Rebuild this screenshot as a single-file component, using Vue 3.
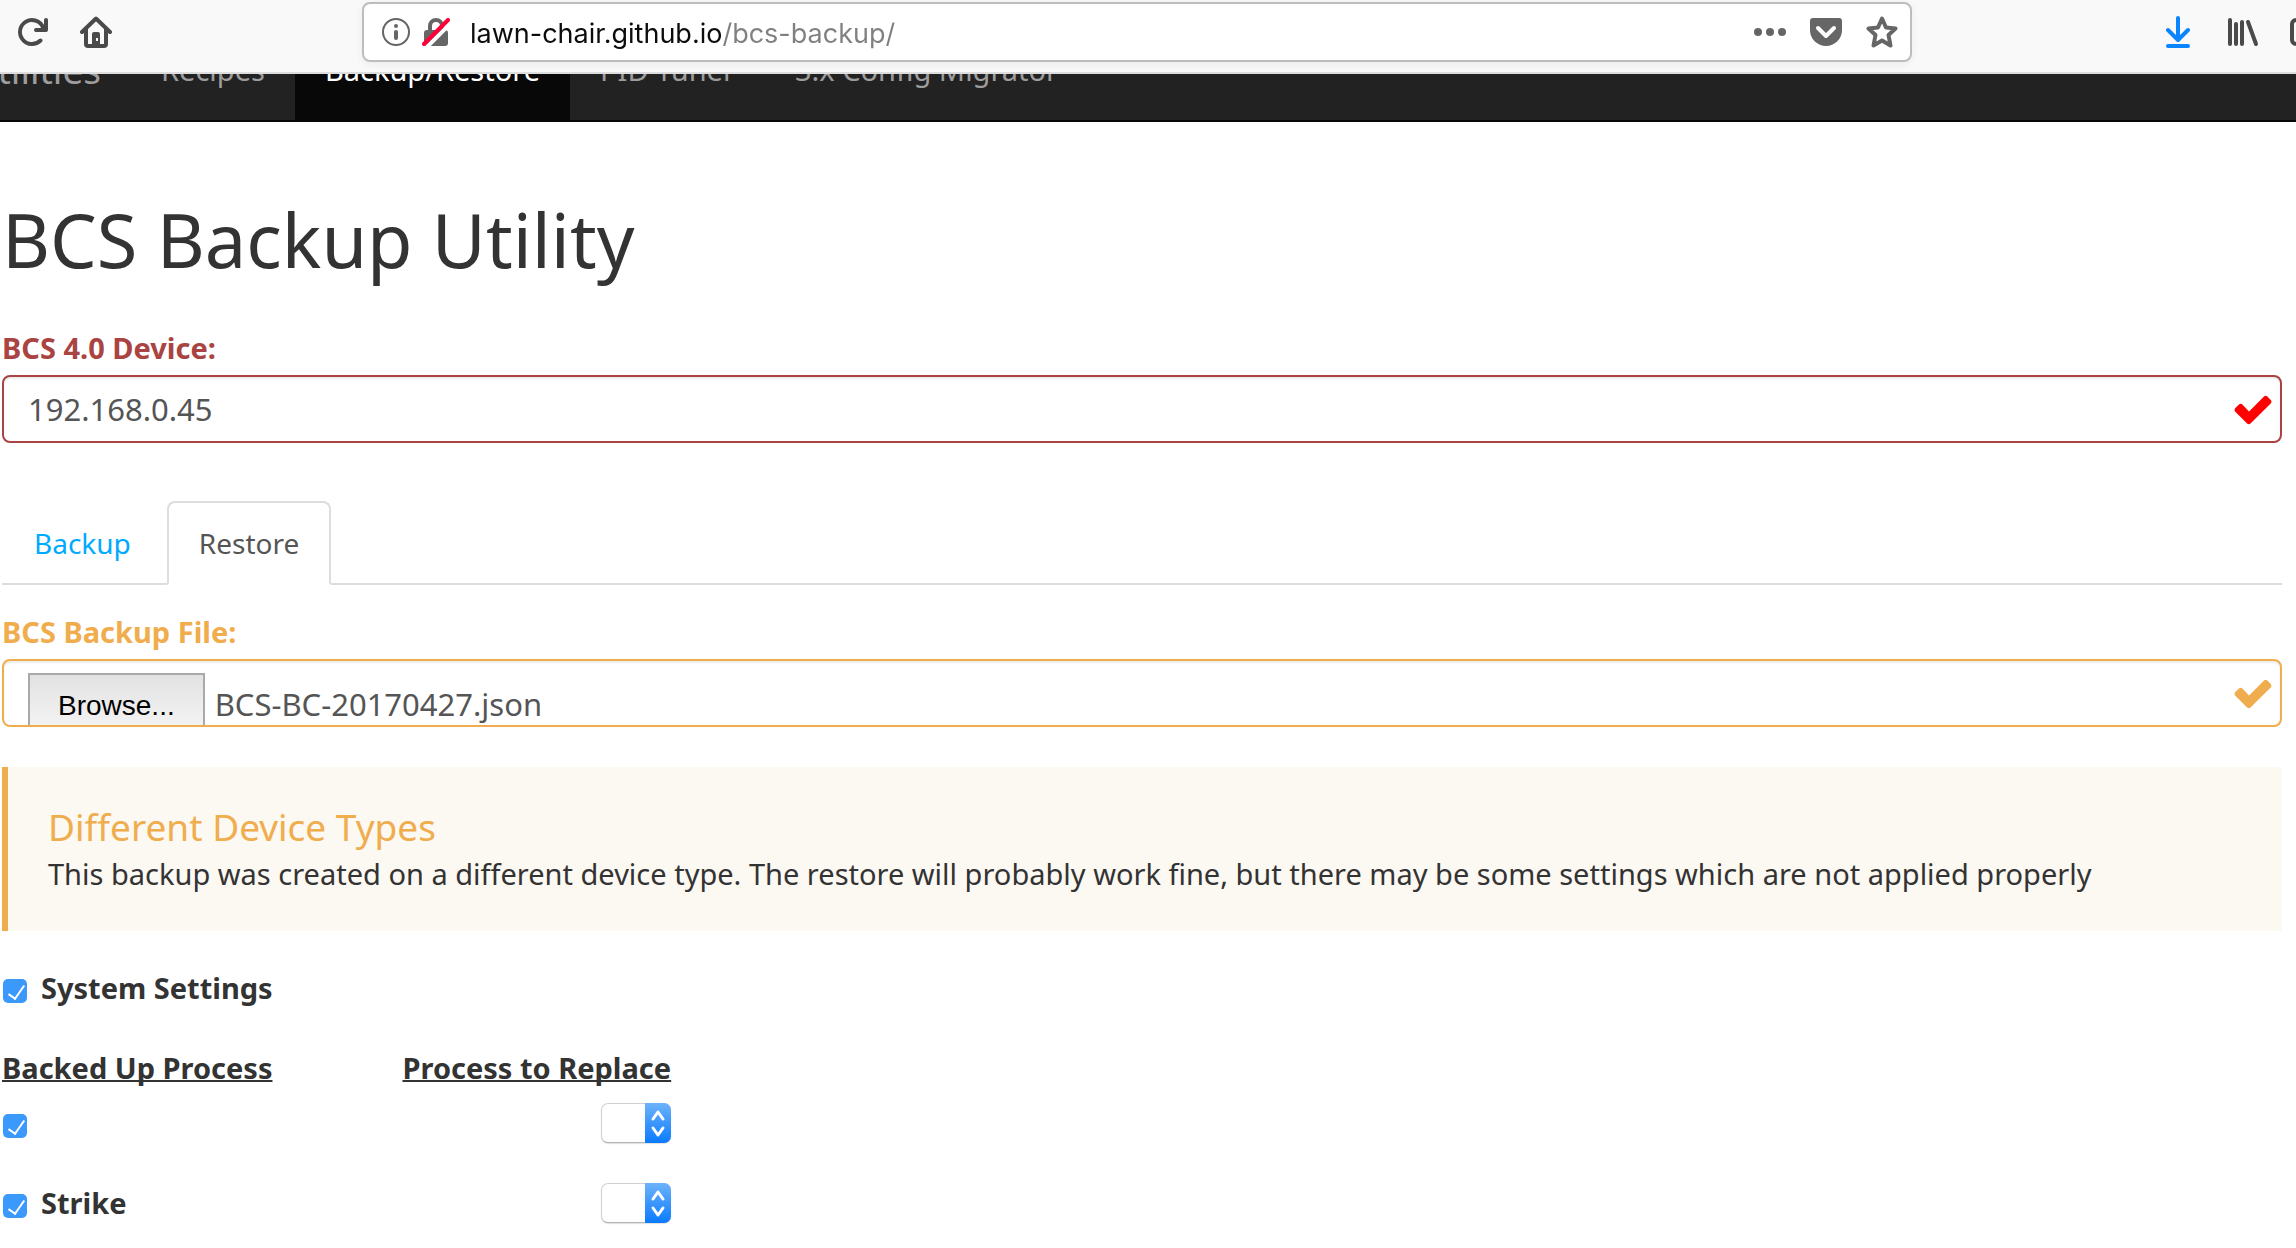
<script setup>
import { ref } from 'vue'

const url = ref('lawn-chair.github.io/bcs-backup/')
const device = ref('192.168.0.45')
const fileName = ref('BCS-BC-20170427.json')
const fileInput = ref(null)
const systemSettings = ref(true)

const navItems = [
  { label: 'Recipes', active: false },
  { label: 'Backup/Restore', active: true },
  { label: 'PID Tuner', active: false },
  { label: '3.x Config Migrator', active: false },
]

const processes = ref([
  { name: '', checked: true },
  { name: 'Strike', checked: true },
])

function onFile(event) {
  const file = event.target.files[0]
  if (file) fileName.value = file.name
}
</script>

<template>
  <div class="window">
    <header class="toolbar">
      <div class="tools-left">
        <button type="button" class="tool" aria-label="Reload">
          <svg width="32" height="32" viewBox="0 0 16 16"><path fill="#4a4a4a" d="M15 1a1 1 0 0 0-1 1v2.418A6.995 6.995 0 1 0 8 15a6.954 6.954 0 0 0 4.95-2.05 1 1 0 0 0-1.414-1.414A5.019 5.019 0 1 1 12.549 6H10a1 1 0 0 0 0 2h5a1 1 0 0 0 1-1V2a1 1 0 0 0-1-1z" /></svg>
        </button>
        <button type="button" class="tool" aria-label="Home">
          <svg width="32" height="32" viewBox="0 0 32 32">
            <path d="M2 16 16 2.500 30 16M6 13v15q0 2 2 2h16q2 0 2-2V13" fill="none" stroke="#4a4a4a" stroke-width="4" stroke-linecap="round" stroke-linejoin="round" />
            <path d="M12 30V18q0-2 2-2h4q2 0 2 2v12z" fill="#4a4a4a" />
            <rect x="16" y="22" width="2" height="3" fill="#f9f9fa" />
          </svg>
        </button>
      </div>
      <div class="urlbar">
        <svg width="28" height="28" viewBox="0 0 28 28">
          <circle cx="14" cy="14" r="13" fill="none" stroke="#666" stroke-width="2" />
          <circle cx="14" cy="8" r="2" fill="#666" />
          <path d="M14 14v6" stroke="#666" stroke-width="4" stroke-linecap="round" />
        </svg>
        <svg class="lock" width="28" height="28" viewBox="0 0 28 28">
          <path d="M8 14V8a6 6 0 0 1 12 0v6" fill="none" stroke="#666" stroke-width="4" />
          <rect x="2" y="12" width="24" height="16" rx="3" fill="#666" />
          <path d="M5 29 30 4" stroke="#fff" stroke-width="4" />
          <path d="M2 26 26 2" stroke="#ff0039" stroke-width="4" stroke-linecap="round" />
        </svg>
        <input v-model="url" class="url" type="text" aria-label="Address" spellcheck="false" />
        <button type="button" class="tool" aria-label="Page actions">
          <svg width="32" height="32" viewBox="0 0 32 32" fill="#666"><circle cx="4" cy="16" r="4" /><circle cx="16" cy="16" r="4" /><circle cx="28" cy="16" r="4" /></svg>
        </button>
        <button type="button" class="tool" aria-label="Save to Pocket">
          <svg width="32" height="32" viewBox="0 0 32 32">
            <path d="M3 2h26q3 0 3 3v9a16 16 0 0 1-32 0V5q0-3 3-3z" fill="#666" />
            <path d="m8 12 8 8 8-8" fill="none" stroke="#fff" stroke-width="4" stroke-linecap="round" stroke-linejoin="round" />
          </svg>
        </button>
        <button type="button" class="tool" aria-label="Bookmark">
          <svg width="32" height="32" viewBox="0 0 32 32"><path d="m16 2.500 4 9 9.500 1-7 6.500 2 10.500-8.500-5-8.500 5 2-10.500-7-6.500 9.500-1z" fill="none" stroke="#666" stroke-width="4" stroke-linejoin="round" /></svg>
        </button>
      </div>
      <div class="tools-right">
        <button type="button" class="tool" aria-label="Downloads">
          <svg width="24" height="32" viewBox="0 0 24 32" fill="none" stroke="#0a84ff" stroke-width="4" stroke-linecap="round" stroke-linejoin="round"><path d="M12 2v21M2 14l10 10 10-10M2 30h20" /></svg>
        </button>
        <button type="button" class="tool" aria-label="Library">
          <svg class="library" width="24" height="32" viewBox="0 0 24 32" fill="none" stroke="#4a4a4a" stroke-width="4" stroke-linecap="round"><path d="M2 4v24M8 8v20M14 6v22M20 6l8 22" /></svg>
        </button>
        <button type="button" class="tool" aria-label="Sidebar">
          <svg width="32" height="32" viewBox="0 0 32 32" fill="none" stroke="#4a4a4a" stroke-width="4"><rect x="2" y="4" width="28" height="24" rx="4" /><path d="M14 4v24" /></svg>
        </button>
      </div>
    </header>

    <div class="viewport">
      <nav class="navbar">
        <a href="#" class="brand">BCS Utilities</a>
        <a v-for="item in navItems" :key="item.label" href="#" class="nav-link" :class="{ active: item.active }">{{ item.label }}</a>
      </nav>
    </div>

    <main class="page">
      <h1>BCS Backup Utility</h1>

      <div class="group error">
        <label for="device">BCS 4.0 Device:</label>
        <div class="field">
          <input id="device" v-model="device" type="text" class="control" />
          <svg class="ok" width="38" height="30" viewBox="0 0 38 30"><path d="M1.300 13 5 9.500q1.700-1.500 3.400 0l6.600 7L30 1.500q1.700-1.500 3.400 0l3.300 3.500q1.500 1.700 0 3.400L16.500 28.600q-1.700 1.500-3.400 0L1.300 16.800q-1.500-1.800 0-3.800z" /></svg>
        </div>
      </div>

      <div class="tabs">
        <a href="#backup" class="tab">Backup</a>
        <a href="#restore" class="tab active">Restore</a>
      </div>

      <div class="group warning">
        <label for="backup-file">BCS Backup File:</label>
        <div class="field">
          <div class="control file">
            <button type="button" class="browse" @click="fileInput.click()">Browse...</button>
            <span class="file-name">{{ fileName }}</span>
            <input id="backup-file" ref="fileInput" type="file" class="file-input" tabindex="-1" @change="onFile" />
          </div>
          <svg class="ok" width="38" height="30" viewBox="0 0 38 30"><path d="M1.300 13 5 9.500q1.700-1.500 3.400 0l6.600 7L30 1.500q1.700-1.500 3.400 0l3.300 3.500q1.500 1.700 0 3.400L16.500 28.600q-1.700 1.500-3.400 0L1.300 16.800q-1.500-1.800 0-3.800z" /></svg>
        </div>
      </div>

      <section class="callout">
        <h4>Different Device Types</h4>
        <p>This backup was created on a different device type. The restore will probably work fine, but there may be some settings which are not applied properly</p>
      </section>

      <label class="check">
        <input v-model="systemSettings" type="checkbox" />
        <span>System Settings</span>
      </label>

      <table class="processes">
        <thead>
          <tr>
            <th scope="col">Backed Up Process</th>
            <th scope="col">Process to Replace</th>
          </tr>
        </thead>
        <tbody>
          <tr v-for="(process, i) in processes" :key="i">
            <td>
              <label class="check">
                <input v-model="process.checked" type="checkbox" :aria-label="process.name || 'Unnamed process'" />
                <span>{{ process.name }}</span>
              </label>
            </td>
            <td>
              <div class="select">
                <select aria-label="Process to Replace"><option value=""></option></select>
                <svg class="arrows" width="26" height="40" viewBox="0 0 26 40" fill="none" stroke="#fff" stroke-width="3" stroke-linecap="round" stroke-linejoin="round"><path d="m8 16 5-7 5 7M8 25l5 7 5-7" /></svg>
              </div>
            </td>
          </tr>
        </tbody>
      </table>
    </main>
  </div>
</template>

<style>
body {
  margin: 0;
  background: #fff;
}
</style>

<style scoped>
.window {
  overflow: hidden;
  color: #333;
  font: 29px/40px "Noto Sans", "Open Sans", sans-serif;
}
.window * {
  box-sizing: border-box;
}
a {
  text-decoration: none;
}

/* Browser toolbar */
.toolbar {
  display: flex;
  height: 74px;
  padding-top: 2px;
  background: #f9f9fa;
  border-bottom: 2px solid #ddd;
}
.tool {
  display: flex;
  flex: none;
  padding: 0;
  border: 0;
  background: none;
}
.tools-left,
.tools-right {
  display: flex;
  flex: none;
  align-items: center;
  height: 60px;
}
.tools-left {
  gap: 32px;
  width: 362px;
  padding-left: 16px;
}
.tools-right {
  gap: 38px;
  width: 384px;
  padding-left: 254px;
  overflow: hidden;
}
.library {
  overflow: visible;
}
.urlbar {
  display: flex;
  flex: 1;
  align-items: center;
  min-width: 0;
  height: 60px;
  padding: 0 12px 0 18px;
  background: #fff;
  border: 2px solid #bdbdbd;
  border-radius: 8px;
  box-shadow: 0 2px 8px rgba(0, 0, 0, 0.06);
}
.lock {
  margin-left: 12px;
}
.url {
  flex: 1;
  min-width: 0;
  height: 42px;
  margin: 0 22px 0 20px;
  padding: 2px 0 0;
  border: 0;
  outline: 0;
  font: 27px/40px Inter, "Liberation Sans", sans-serif;
  color: transparent;
  background: linear-gradient(90deg, #0c0c0d 252px, #808080 252px);
  -webkit-background-clip: text;
  background-clip: text;
}
.urlbar .tool + .tool {
  margin-left: 24px;
}

/* Site navigation, scrolled partly under the toolbar */
.viewport {
  display: flex;
  align-items: flex-end;
  height: 48px;
  overflow: hidden;
}
.navbar {
  display: flex;
  flex: 1;
  height: 102px;
  background: #222;
  border-bottom: 2px solid #080808;
}
.brand,
.nav-link {
  padding: 30px;
  color: #9d9d9d;
  white-space: nowrap;
}
.brand {
  display: flex;
  justify-content: flex-end;
  width: 131px;
  font-size: 37px;
}
.nav-link.active {
  color: #fff;
  background: #080808;
}

/* Page */
.page {
  padding: 78px 14px 24px 2px;
}
h1 {
  margin: 0 0 48px;
  font-size: 74px;
  line-height: 80px;
  font-weight: 400;
}
.group label {
  display: block;
  margin-bottom: 7px;
  font-weight: 700;
}
.field {
  position: relative;
}
.control {
  display: block;
  width: 100%;
  height: 68px;
  padding: 12px 24px;
  border: 2px solid;
  border-radius: 8px;
  outline: 0;
  background: #fff;
  box-shadow: inset 0 2px 2px rgba(0, 0, 0, 0.075);
  color: #555;
  font: 31px/40px "Noto Sans", "Open Sans", sans-serif;
}
.error label {
  color: #a94442;
}
.error .control {
  border-color: #a94442;
}
.error .ok {
  fill: #f00;
}
.warning label {
  color: #f0ad4e;
}
.warning .control {
  border-color: #f0ad4e;
}
.warning .ok {
  fill: #f0ad4e;
}
.ok {
  position: absolute;
  right: 10px;
  top: 20px;
}
.file {
  display: flex;
  align-items: flex-start;
  gap: 10px;
  padding-bottom: 0;
  overflow: hidden;
}
.browse {
  flex: none;
  padding: 11px 28px;
  border: 2px solid #a9a9a9;
  background: linear-gradient(#e2e2e2, #f6f6f6 60px);
  color: #000;
  font: 28px/40px "Liberation Sans", sans-serif;
}
.file-name {
  padding-top: 11px;
}
.file-input {
  width: 1px;
  height: 1px;
  opacity: 0;
}
.tabs {
  display: flex;
  gap: 4px;
  margin: 58px 0 27px;
  border-bottom: 2px solid #ddd;
  font-size: 28px;
}
.tab {
  margin-bottom: -2px;
  padding: 20px 30px;
  border: 2px solid transparent;
  border-radius: 8px 8px 0 0;
  color: #00aaff;
}
.tab.active {
  color: #555;
  background: #fff;
  border-color: #ddd #ddd #fff;
}
.callout {
  margin: 40px 0 37px;
  padding: 40px 40px 37px;
  background: #fcf8f2;
  border-left: 6px solid #f0ad4e;
}
.callout h4 {
  margin: 0 0 7px;
  font-size: 37px;
  line-height: 40px;
  font-weight: 400;
  color: #f0ad4e;
}
.callout p {
  margin: 0;
}
.check {
  display: flex;
  gap: 14px;
  height: 40px;
  font-weight: 700;
}
.check input {
  appearance: none;
  position: relative;
  flex: none;
  width: 24px;
  height: 24px;
  margin: 11px 0 0 1px;
  border-radius: 5px;
  background: #3b99fc;
}
.check input:checked::after {
  content: "";
  position: absolute;
  left: 9px;
  top: 3px;
  width: 7px;
  height: 15px;
  border: solid #fff;
  border-width: 0 2px 2px 0;
  transform: rotate(35deg);
}
.processes {
  margin-top: 40px;
  border-collapse: collapse;
}
th,
td {
  padding: 0;
  text-align: left;
}
th {
  padding-bottom: 15px;
  text-decoration: underline;
  text-decoration-thickness: 2px;
  text-decoration-skip-ink: none;
}
th + th {
  padding-left: 130px;
}
td {
  padding-bottom: 40px;
}
tr:last-child td {
  padding-bottom: 0;
}
.select {
  position: relative;
  width: 70px;
  margin-left: auto;
}
select {
  appearance: none;
  display: block;
  width: 70px;
  height: 40px;
  border: 1px solid #d0d0d0;
  border-bottom-color: #b5b5b5;
  border-radius: 7px;
  background: #fff;
  box-shadow: 0 1px 1px rgba(0, 0, 0, 0.12);
}
.arrows {
  position: absolute;
  top: 0;
  right: 0;
  border-radius: 0 7px 7px 0;
  background: linear-gradient(#6db3fa, #0a7aff);
  pointer-events: none;
}
</style>
